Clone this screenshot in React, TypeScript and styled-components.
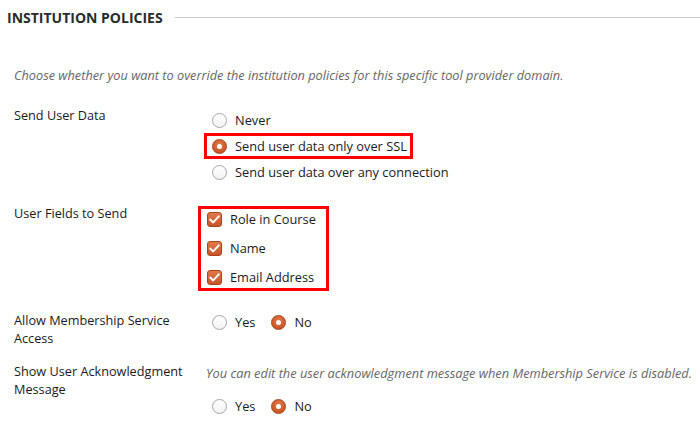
import React from "react";
import styled, { createGlobalStyle, css } from "styled-components";

const Global = createGlobalStyle`
  html, body { margin: 0; padding: 0; background: #fff; }
  body { font-family: "Open Sans", "DejaVu Sans", sans-serif; color: #1a1a1a; }
`;

const Page = styled.div`
  width: 700px;
  height: 438px;
  overflow: hidden;
  box-sizing: border-box;
`;

const Header = styled.div`
  display: flex;
  align-items: center;
  gap: 12px;
  height: 34px;
  padding-left: 7px;
`;

const Title = styled.h2`
  margin: 0;
  font-size: 14px;
  font-weight: 700;
  color: #2b2b2b;
  text-transform: uppercase;
  white-space: nowrap;
`;

const Rule = styled.div`
  flex: 1;
  height: 1px;
  background: #cccccc;
`;

const Description = styled.p`
  margin: 32px 0 0 14px;
  font-size: 12.75px;
  line-height: 18px;
  font-style: italic;
  color: #666;
`;

const Form = styled.div`
  padding-left: 14px;
`;

const Row = styled.div<{ $mt: number }>`
  display: grid;
  grid-template-columns: 192px 1fr;
  margin-top: ${(p) => p.$mt}px;
`;

const Label = styled.div`
  font-size: 12.7px;
  line-height: 18px;
  color: #1a1a1a;
`;

const Control = styled.div<{ $offset?: number }>`
  display: flex;
  flex-direction: column;
  align-items: flex-start;
  padding-top: ${(p) => p.$offset ?? 0}px;
`;

const Note = styled.div`
  font-size: 12.8px;
  line-height: 18px;
  font-style: italic;
  color: #666;
  white-space: nowrap;
  margin-top: 2px;
`;

const RadioList = styled.div<{ $inline?: boolean; $mt?: number }>`
  display: flex;
  flex-direction: ${(p) => (p.$inline ? "row" : "column")};
  gap: ${(p) => (p.$inline ? "7px" : "6px")};
  align-items: flex-start;
  margin-top: ${(p) => p.$mt ?? 0}px;
`;

const Option = styled.label<{ $highlight?: boolean }>`
  display: inline-flex;
  align-items: center;
  gap: 8px;
  height: 20px;
  padding: 0 3px 0 6px;
  font-size: 12.8px;
  color: #1a1a1a;
  white-space: nowrap;
  ${(p) =>
    p.$highlight &&
    css`
      outline: 3px solid #ff0000;
      padding-left: 5px;
      margin-left: 1px;
    `}
`;

const RadioDot = styled.span<{ $checked?: boolean }>`
  box-sizing: border-box;
  width: 15px;
  height: 15px;
  border-radius: 50%;
  flex: none;
  position: relative;
  ${(p) =>
    p.$checked
      ? css`
          background: radial-gradient(circle at 50% 35%, #e27b4c 0%, #cf5c2c 60%, #b4471d 100%);
          border: 1px solid #a9451d;
          &::after {
            content: "";
            position: absolute;
            left: 50%;
            top: 50%;
            width: 5px;
            height: 5px;
            margin: -2.5px 0 0 -2.5px;
            border-radius: 50%;
            background: #fff;
          }
        `
      : css`
          background: linear-gradient(#ffffff, #f2f2f2);
          border: 1px solid #a6a6a6;
        `}
`;

const CheckGroup = styled.div`
  display: flex;
  flex-direction: column;
  gap: 9px;
  margin-left: -5px;
  padding: 0 10px 1px 6px;
  outline: 3px solid #ff0000;
`;

const CheckItem = styled.label`
  display: inline-flex;
  align-items: center;
  gap: 8px;
  height: 20px;
  font-size: 12.8px;
  color: #1a1a1a;
  white-space: nowrap;
`;

const CheckBox = styled.span`
  box-sizing: border-box;
  width: 15px;
  height: 15px;
  border-radius: 3px;
  flex: none;
  display: flex;
  align-items: center;
  justify-content: center;
  background: linear-gradient(#e07a4b, #c75529);
  border: 1px solid #a9451d;
`;

const Radio = ({ label, checked, highlight }: { label: string; checked?: boolean; highlight?: boolean }) => (
  <Option $highlight={highlight}>
    <RadioDot $checked={checked} />
    {label}
  </Option>
);

const Check = ({ label }: { label: string }) => (
  <CheckItem>
    <CheckBox>
      <svg width="11" height="9" viewBox="0 0 11 9">
        <path d="M1.2 4.6 L4.2 7.4 L9.8 1.4" fill="none" stroke="#fff" strokeWidth="2" strokeLinecap="round" strokeLinejoin="round" />
      </svg>
    </CheckBox>
    {label}
  </CheckItem>
);

export default function App() {
  return (
    <Page>
      <Global />
      <Header>
        <Title>Institution Policies</Title>
        <Rule />
      </Header>
      <Description>
        Choose whether you want to override the institution policies for this specific tool provider domain.
      </Description>
      <Form>
        <Row $mt={22}>
          <Label>Send User Data</Label>
          <Control $offset={4}>
            <RadioList>
              <Radio label="Never" />
              <Radio label="Send user data only over SSL" checked highlight />
              <Radio label="Send user data over any connection" />
            </RadioList>
          </Control>
        </Row>
        <Row $mt={22}>
          <Label>User Fields to Send</Label>
          <Control $offset={5}>
            <CheckGroup>
              <Check label="Role in Course" />
              <Check label="Name" />
              <Check label="Email Address" />
            </CheckGroup>
          </Control>
        </Row>
        <Row $mt={23}>
          <Label>
            Allow Membership Service
            <br />
            Access
          </Label>
          <Control $offset={1}>
            <RadioList $inline>
              <Radio label="Yes" />
              <Radio label="No" checked />
            </RadioList>
          </Control>
        </Row>
        <Row $mt={15}>
          <Label>
            Show User Acknowledgment
            <br />
            Message
          </Label>
          <Control>
            <Note>You can edit the user acknowledgment message when Membership Service is disabled.</Note>
            <RadioList $inline $mt={14}>
              <Radio label="Yes" />
              <Radio label="No" checked />
            </RadioList>
          </Control>
        </Row>
      </Form>
    </Page>
  );
}
